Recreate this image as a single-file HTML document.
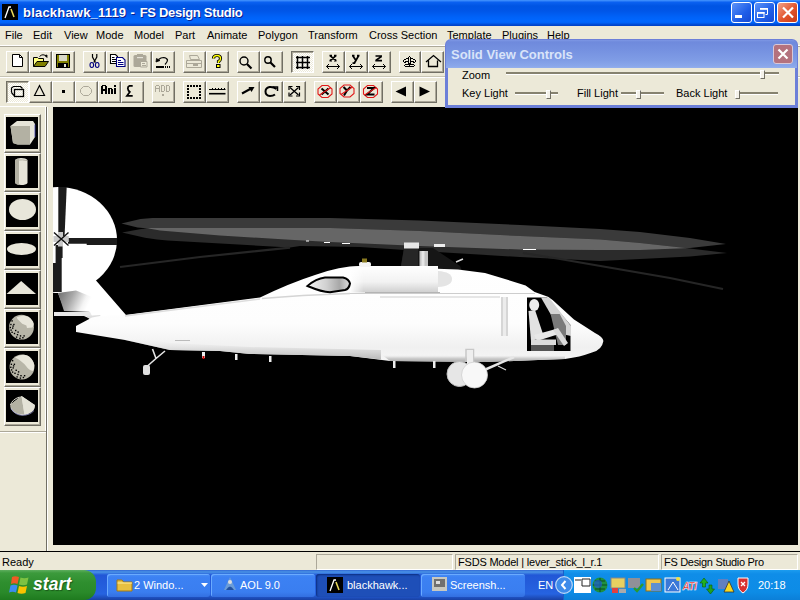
<!DOCTYPE html>
<html><head><meta charset="utf-8">
<style>
*{margin:0;padding:0;box-sizing:border-box}
html,body{width:800px;height:600px;overflow:hidden;background:#ECE9D8;font-family:"Liberation Sans",sans-serif;font-size:11px;color:#000;position:relative}
.abs{position:absolute}
#title{left:0;top:0;width:800px;height:26px;background:linear-gradient(#4A9AFF 0px,#2A7CF8 1px,#0A60F0 2.5px,#0054E3 6px,#0056E8 11px,#0062F8 17px,#0067FF 21px,#0062F6 23px,#0050DC 24px,#0040C4 26px)}
#ttext{left:23px;top:5px;color:#fff;font-weight:bold;font-size:13px;letter-spacing:0.2px;text-shadow:1px 1px 0 #0A1F8F}
.tb{top:2px;width:21px;height:21px;border:1px solid #fff;border-radius:3px;background:linear-gradient(135deg,#5D93F8,#1F5EE8 60%,#1649D3)}
.menu{top:29px;font-size:11px}
.btn{width:23px;height:22px;border-top:1px solid #fff;border-left:1px solid #fff;border-right:1px solid #716F64;border-bottom:1px solid #716F64;box-shadow:inset -1px -1px 0 #ACA899}
.btn svg{position:absolute;left:2px;top:2px}
.pressed{border-top:1px solid #716F64;border-left:1px solid #716F64;border-right:1px solid #fff;border-bottom:1px solid #fff;box-shadow:inset 1px 1px 0 #ACA899;background:repeating-conic-gradient(#fff 0 25%,#ECE9D8 0 50%) 0 0/2px 2px}
.lbtn{left:4px;width:37px;height:39px;border-top:1px solid #fff;border-left:1px solid #fff;border-right:1px solid #716F64;border-bottom:1px solid #716F64;box-shadow:inset -1px -1px 0 #ACA899}
.lbtn .in{position:absolute;left:2px;top:2px;width:32px;height:32px;background:#000}
#view{left:53px;top:107px;width:745px;height:438px;background:#000;overflow:hidden}
.sp{top:554px;height:16px;border-top:1px solid #ACA899;border-left:1px solid #ACA899;border-right:1px solid #fff;border-bottom:1px solid #fff;padding-left:2px;line-height:14px}
.tbtn{top:574px;height:23px;border-radius:3px;background:linear-gradient(#4A90F5 0px,#3C81F3 3px,#3A7EF0 18px,#336FE0 23px);box-shadow:inset 1px 1px 0 #6AAAFF}
.ttxt{top:578px;color:#fff;font-size:11px;line-height:14px}
#task{left:0;top:570px;width:800px;height:30px;background:linear-gradient(#3168D5 0px,#4993E6 2px,#2157D7 5px,#2663E0 24px,#1941A5 30px)}
</style></head><body>
<!-- title bar -->
<div id="title" class="abs"></div>
<div class="abs" style="left:2px;top:4px;width:16px;height:16px;background:#000">
<svg width="16" height="16" viewBox="0 0 16 16"><path d="M3 14 L7 3 L9 3" stroke="#fff" stroke-width="1.3" fill="none"/><path d="M9 5 L12 13" stroke="#EBD95A" stroke-width="1.6" fill="none"/></svg>
</div>
<div id="ttext" class="abs">blackhawk_1119<span style="letter-spacing:0.6px"> - </span><span style="letter-spacing:-0.3px">FS Design Studio</span></div>
<div class="abs tb" style="left:731px"></div>
<div class="abs tb" style="left:754px"></div>
<div class="abs tb" style="left:777px;background:linear-gradient(135deg,#F1A28A,#E2542C 55%,#C93A16)"></div>
<svg class="abs" style="left:731px;top:2px" width="67" height="21" viewBox="731 2 67 21">
<rect x="735" y="15" width="7" height="3" fill="#fff"/>
<path d="M760.5 8.5h7v6h-2" fill="none" stroke="#fff" stroke-width="1"/><rect x="760" y="8" width="8" height="1.8" fill="#fff"/>
<rect x="757.5" y="12.5" width="6.5" height="5" fill="none" stroke="#fff" stroke-width="1"/><rect x="757" y="12" width="7.5" height="1.8" fill="#fff"/>
<path d="M783 7.5L793 17.5M793 7.5L783 17.5" stroke="#fff" stroke-width="2.2"/>
</svg>

<!-- menu -->
<div class="abs menu" style="left:5px">File</div>
<div class="abs menu" style="left:33px">Edit</div>
<div class="abs menu" style="left:64px">View</div>
<div class="abs menu" style="left:96px">Mode</div>
<div class="abs menu" style="left:134px">Model</div>
<div class="abs menu" style="left:175px">Part</div>
<div class="abs menu" style="left:207px">Animate</div>
<div class="abs menu" style="left:258px">Polygon</div>
<div class="abs menu" style="left:308px">Transform</div>
<div class="abs menu" style="left:369px">Cross Section</div>
<div class="abs menu" style="left:447px">Template</div>
<div class="abs menu" style="left:502px">Plugins</div>
<div class="abs menu" style="left:547px">Help</div>
<div class="abs" style="left:0;top:45px;width:800px;height:1px;background:#fff"></div>
<div class="abs" style="left:0;top:46px;width:800px;height:1px;background:#ACA899"></div>

<!-- toolbar row 1 -->
<div class="abs" style="left:0;top:76px;width:800px;height:1px;background:#C8C5B4"></div>
<div class="abs" style="left:0;top:77px;width:800px;height:1px;background:#fff"></div>
<div class="abs btn" style="left:6px;top:51px;width:23px"></div>
<div class="abs btn" style="left:29px;top:51px;width:23px"></div>
<div class="abs btn" style="left:52px;top:51px;width:23px"></div>
<div class="abs btn" style="left:83px;top:51px;width:23px"></div>
<div class="abs btn" style="left:106px;top:51px;width:23px"></div>
<div class="abs btn" style="left:129px;top:51px;width:23px"></div>
<div class="abs btn" style="left:152px;top:51px;width:23px"></div>
<div class="abs btn" style="left:183px;top:51px;width:23px"></div>
<div class="abs btn" style="left:206px;top:51px;width:23px"></div>
<div class="abs btn" style="left:237px;top:51px;width:23px"></div>
<div class="abs btn" style="left:260px;top:51px;width:23px"></div>
<div class="abs btn pressed" style="left:291px;top:51px;width:23px"></div>
<div class="abs btn" style="left:322px;top:51px;width:23px"></div>
<div class="abs btn" style="left:345px;top:51px;width:23px"></div>
<div class="abs btn" style="left:368px;top:51px;width:23px"></div>
<div class="abs btn" style="left:399px;top:51px;width:22px"></div>
<div class="abs btn" style="left:421px;top:51px;width:23px"></div>
<div class="abs btn pressed" style="left:6px;top:81px;width:23px"></div>
<div class="abs btn" style="left:29px;top:81px;width:23px"></div>
<div class="abs btn" style="left:52px;top:81px;width:23px"></div>
<div class="abs btn" style="left:75px;top:81px;width:23px"></div>
<div class="abs btn" style="left:98px;top:81px;width:23px"></div>
<div class="abs btn" style="left:121px;top:81px;width:23px"></div>
<div class="abs btn" style="left:152px;top:81px;width:23px"></div>
<div class="abs btn" style="left:183px;top:81px;width:23px"></div>
<div class="abs btn" style="left:206px;top:81px;width:23px"></div>
<div class="abs btn" style="left:237px;top:81px;width:23px"></div>
<div class="abs btn" style="left:260px;top:81px;width:23px"></div>
<div class="abs btn" style="left:283px;top:81px;width:23px"></div>
<div class="abs btn" style="left:314px;top:81px;width:23px"></div>
<div class="abs btn" style="left:337px;top:81px;width:23px"></div>
<div class="abs btn" style="left:360px;top:81px;width:23px"></div>
<div class="abs btn" style="left:391px;top:81px;width:23px"></div>
<div class="abs btn" style="left:414px;top:81px;width:23px"></div>
<svg class="abs" style="left:0;top:0" width="450" height="106" viewBox="0 0 450 106">
<!-- new -->
<path d="M12.5 54.5H19.5L22.5 57.5V66.5H12.5Z" fill="#fff" stroke="#000"/>
<path d="M19.5 54.5V57.5H22.5" fill="none" stroke="#000"/>
<!-- open -->
<path d="M33.5 66.5V57.5H37.5L38.5 58.5H43.5V61" fill="#FFFF80" stroke="#000"/>
<path d="M33.5 66.5L37 61.5H48.5L45 66.5Z" fill="#808000" stroke="#000"/>
<path d="M39.5 56.5Q43 53 46.5 56.5" fill="none" stroke="#000"/>
<path d="M45 55.5L47 57.5L47 55Z" fill="#000" stroke="#000" stroke-width="0.8"/>
<!-- save -->
<rect x="56.5" y="54.5" width="13" height="13" fill="#808000" stroke="#000"/>
<rect x="59" y="55" width="8" height="6" fill="#D8D8C8"/>
<rect x="58" y="63" width="10" height="4.5" fill="#000"/>
<rect x="64" y="64" width="2" height="3" fill="#E0E0D0"/>
<!-- cut -->
<path d="M92.5 54V57L95.5 62.5M96.8 54V57L93.8 62.5" fill="none" stroke="#000" stroke-width="1.2"/>
<ellipse cx="91.8" cy="65" rx="1.8" ry="2.5" fill="none" stroke="#000080" stroke-width="1.1"/>
<ellipse cx="97.2" cy="65" rx="1.8" ry="2.5" fill="none" stroke="#000080" stroke-width="1.1"/>
<!-- copy -->
<path d="M110.5 54.5H115.5L117.5 56.5V63.5H110.5Z" fill="#fff" stroke="#000" stroke-width="1.1"/>
<path d="M112 57.5H114.5M112 59.5H116M112 61.5H116" stroke="#000"/>
<path d="M116.5 57.5H122.5L125 60V66.5H116.5Z" fill="#fff" stroke="#000080" stroke-width="1.1"/>
<path d="M118 60.5H121M118 62.5H123.5M118 64.5H123.5" stroke="#000080"/>
<!-- paste gray -->
<rect x="133.5" y="55" width="13" height="12" rx="1.5" fill="#ACA899"/>
<rect x="137" y="54" width="6" height="2" fill="#ACA899"/>
<rect x="137" y="57" width="6" height="1.2" fill="#E4E2D8"/>
<path d="M140.5 61.5H147V67H140.5Z" fill="#ECE9D8" stroke="#ACA899"/>
<path d="M142 63.5H145M142 65.5H146" stroke="#ACA899"/>
<!-- undo -->
<path d="M158.5 59.5Q161 57.5 163.5 57.5Q167 57.8 167.5 60Q167.5 62 165 64.5" fill="none" stroke="#000" stroke-width="1.2"/>
<path d="M156 62L156.5 58.5L160 60.5Z" fill="#000" stroke="#000" stroke-width="0.8"/>
<g shape-rendering="crispEdges" fill="#000"><rect x="156" y="66" width="8" height="2"/><rect x="165" y="66" width="1" height="2"/><rect x="167" y="66" width="1" height="2"/><rect x="169" y="66" width="1" height="2"/></g>
<!-- print gray -->
<path d="M189.5 55.5H197.5L199.5 59.5H190.5Z" fill="#ECE9D8" stroke="#ACA899"/>
<path d="M186.5 60.5H201.5V67.5H186.5Z" fill="#ECE9D8" stroke="#ACA899"/>
<path d="M187 63.5H201" stroke="#ACA899"/>
<rect x="193" y="64" width="5" height="2" fill="#ACA899"/>
<!-- help -->
<path d="M213.5 58.5Q213.5 55.5 217 55.5Q220.5 55.5 220.5 58.5Q220.5 60.5 218.5 61.5V63" fill="none" stroke="#000" stroke-width="3.2"/>
<path d="M213.5 58.5Q213.5 55.5 217 55.5Q220.5 55.5 220.5 58.5Q220.5 60.5 218.5 61.5V63" fill="none" stroke="#FFFF00" stroke-width="1.4"/>
<rect x="216.5" y="64.5" width="3.5" height="3" fill="#FFFF00" stroke="#000"/>
<!-- zoom in -->
<circle cx="244" cy="61" r="4" fill="none" stroke="#000" stroke-width="1.4"/>
<path d="M247 64L251.5 68.5" stroke="#000" stroke-width="2.2"/>
<!-- zoom out -->
<circle cx="268" cy="60" r="3.2" fill="none" stroke="#000" stroke-width="1.4"/>
<path d="M270.5 62.5L275 67" stroke="#000" stroke-width="2.2"/>
<!-- grid -->
<path d="M297.5 56V69M302.5 56V69M307.5 56V69M296 57.5H310M296 62.5H310M296 67.5H310" stroke="#000" stroke-width="1.5"/>
<!-- xyz -->
<path d="M330.3 55.8L336 60.5M335.7 55.8L330.3 60.5M329.5 55.6H332M334 55.6H336.5M329.5 60.6H332M334 60.6H336.5" stroke="#000" stroke-width="1.7"/>
<path d="M352.8 55.8L355.8 60.3M358.6 55.8L354.3 63.2M352 55.6H354.5M357 55.6H359.5M352.5 63.2H355.3" stroke="#000" stroke-width="1.7"/>
<path d="M375.5 56H382M381.5 56.5L376 60.2M375.3 60.6H382" stroke="#000" stroke-width="1.6"/>
<path d="M326.5 66.5H339.5M329 64L326.5 66.5L329 69M337 64L339.5 66.5L337 69" fill="none" stroke="#000" stroke-width="1"/>
<path d="M349.5 66.5H362.5M352 64L349.5 66.5L352 69M360 64L362.5 66.5L360 69" fill="none" stroke="#000" stroke-width="1"/>
<path d="M372.5 66.5H385.5M375 64L372.5 66.5L375 69M383 64L385.5 66.5L383 69" fill="none" stroke="#000" stroke-width="1"/>
<!-- top symbol -->
<g fill="#000" shape-rendering="crispEdges"><rect x="409" y="56" width="1" height="1"/><rect x="408" y="57" width="1" height="7"/><rect x="410" y="57" width="1" height="7"/><rect x="406" y="58" width="2" height="1"/><rect x="411" y="58" width="2" height="1"/><rect x="404" y="59" width="2" height="1"/><rect x="413" y="59" width="2" height="1"/><rect x="403" y="60" width="1" height="2"/><rect x="415" y="60" width="1" height="2"/><rect x="404" y="62" width="2" height="1"/><rect x="413" y="62" width="2" height="1"/><rect x="405" y="61" width="3" height="1"/><rect x="411" y="61" width="3" height="1"/><rect x="409" y="63" width="1" height="1"/><rect x="405" y="64" width="9" height="1"/><rect x="405" y="66" width="9" height="1"/><rect x="404" y="65" width="1" height="1"/><rect x="414" y="65" width="1" height="1"/><rect x="409" y="64" width="1" height="3"/></g>
<!-- house -->
<path d="M426 62L433.5 55.5L441 62M428.5 60.5V66.5H437.5V60.5" fill="none" stroke="#000" stroke-width="1.3"/>

<!-- row 2 -->
<path d="M11.5 92.5V88L13.5 86.5H20.5L22.5 88.5M11.5 92.5L14 95.5" fill="none" stroke="#000" stroke-width="1.2"/>
<rect x="14.5" y="89.5" width="9" height="7" fill="none" stroke="#000" stroke-width="1.3"/>
<path d="M34.5 95.5L39.5 85.5L44.5 95.5Z" fill="#ECE9D8" stroke="#000" stroke-width="1.2"/>
<rect x="62" y="90" width="3" height="3" fill="#000"/>
<path d="M83.5 86.5H88.5L91.5 89.5V92.5L88.5 95.5H83.5L80.5 92.5V89.5Z" fill="none" stroke="#ACA899"/>
<g fill="#000" shape-rendering="crispEdges"><rect x="102" y="85" width="4" height="1"/><rect x="101" y="86" width="2" height="8"/><rect x="105" y="86" width="2" height="8"/><rect x="103" y="89" width="2" height="2"/><rect x="108" y="88" width="4" height="1"/><rect x="108" y="88" width="2" height="6"/><rect x="111" y="89" width="2" height="5"/><rect x="114" y="85" width="2" height="2"/><rect x="114" y="88" width="2" height="6"/></g>
<path d="M132.7 85.8H129.5Q127.8 86.3 127.8 88.5Q128 90.5 129.8 92L127 95.8H132.7" fill="none" stroke="#000" stroke-width="1.8"/>
<g fill="#ACA899" shape-rendering="crispEdges"><rect x="156" y="85" width="3" height="1"/><rect x="155" y="86" width="1" height="6"/><rect x="159" y="86" width="1" height="6"/><rect x="156" y="88" width="3" height="1"/><rect x="161" y="85" width="3" height="1"/><rect x="161" y="91" width="3" height="1"/><rect x="161" y="85" width="1" height="7"/><rect x="164" y="86" width="1" height="5"/><rect x="166" y="85" width="3" height="1"/><rect x="166" y="91" width="3" height="1"/><rect x="166" y="85" width="1" height="7"/><rect x="169" y="86" width="1" height="5"/></g>
<rect x="162" y="94" width="2" height="2" fill="#ACA899" shape-rendering="crispEdges"/>
<g fill="#000" shape-rendering="crispEdges"><rect x="187" y="85" width="2" height="2"/><rect x="187" y="97" width="2" height="2"/><rect x="190" y="85" width="2" height="2"/><rect x="190" y="97" width="2" height="2"/><rect x="193" y="85" width="2" height="2"/><rect x="193" y="97" width="2" height="2"/><rect x="196" y="85" width="2" height="2"/><rect x="196" y="97" width="2" height="2"/><rect x="199" y="85" width="2" height="2"/><rect x="199" y="97" width="2" height="2"/><rect x="187" y="88" width="2" height="2"/><rect x="199" y="88" width="2" height="2"/><rect x="187" y="91" width="2" height="2"/><rect x="199" y="91" width="2" height="2"/><rect x="187" y="94" width="2" height="2"/><rect x="199" y="94" width="2" height="2"/></g>
<path d="M209 89.5H225.5" stroke="#000" stroke-width="1"/>
<path d="M209 93.7H225.5" stroke="#000" stroke-width="1.6"/>
<path d="M212.5 88V89M215.5 88V89M218.5 88V89M221.5 88V89M224.5 88V89" stroke="#000"/>
<path d="M242 93.5L252 88" stroke="#000" stroke-width="2"/>
<path d="M248.5 87L254.5 87L251.5 92Z" fill="#000"/>
<path d="M276.5 89Q273 86.5 269.5 87Q265.5 88 265.5 91.5Q265.5 95.5 270 96Q273 96 275 94.5" fill="none" stroke="#000" stroke-width="2"/>
<path d="M272.5 87H277.5V91" fill="none" stroke="#000" stroke-width="1.5"/>
<path d="M290 87.5L298.5 95M298.5 87.5L290 95" stroke="#000" stroke-width="1.3"/>
<path d="M289 90V86.5H292.5M296 86.5H299.5V90M289 92.5V96H292.5M296 96H299.5V92.5" fill="none" stroke="#000" stroke-width="1.2"/>
<g fill="none" stroke="#E01818" stroke-width="1.1">
<path d="M322 85.5H328L332 89V94L328 97.5H322L318 94V89Z"/>
<path d="M344 85H350L354 88.5V93.5L350 97H344L340 93.5V88.5Z"/>
<path d="M367.5 85.5H373.5L377.5 89V94L373.5 97.5H367.5L363.5 94V89Z"/>
</g>
<path d="M321.5 88.5L328.5 94.5M328.5 88.5L321.5 94.5" stroke="#000" stroke-width="2"/>
<path d="M343.5 87L347 90.5L350.5 87M347 90.5L344 95.5" fill="none" stroke="#000" stroke-width="2"/>
<path d="M367 88H374L367 94.5H374.5" fill="none" stroke="#000" stroke-width="1.9"/>
<path d="M319.5 95L331 87.5M341 94.5L352.5 87M364.5 95L376.5 87.5" stroke="#E01818" stroke-width="1.1"/>
<path d="M395.5 91.5L406 86.5V96.5Z" fill="#000"/>
<path d="M430 91.5L419.5 86.5V96.5Z" fill="#000"/>
</svg>


<div class="abs" style="left:0;top:106px;width:46px;height:1px;background:#fff"></div>

<!-- left toolbar -->
<div class="abs" style="left:0;top:107px;width:46px;height:325px;border-right:1px solid #fff"></div>
<div class="abs lbtn" style="top:114px"></div>
<div class="abs" style="left:6px;top:117px;width:32px;height:32px;background:#000"></div>
<div class="abs lbtn" style="top:153px"></div>
<div class="abs" style="left:6px;top:156px;width:32px;height:32px;background:#000"></div>
<div class="abs lbtn" style="top:192px"></div>
<div class="abs" style="left:6px;top:195px;width:32px;height:32px;background:#000"></div>
<div class="abs lbtn" style="top:231px"></div>
<div class="abs" style="left:6px;top:234px;width:32px;height:32px;background:#000"></div>
<div class="abs lbtn" style="top:270px"></div>
<div class="abs" style="left:6px;top:273px;width:32px;height:32px;background:#000"></div>
<div class="abs lbtn" style="top:309px"></div>
<div class="abs" style="left:6px;top:312px;width:32px;height:32px;background:#000"></div>
<div class="abs lbtn" style="top:348px"></div>
<div class="abs" style="left:6px;top:351px;width:32px;height:32px;background:#000"></div>
<div class="abs lbtn" style="top:387px"></div>
<div class="abs" style="left:6px;top:390px;width:32px;height:32px;background:#000"></div>
<svg class="abs" style="left:0;top:107px" width="46" height="320" viewBox="0 107 46 320">
<!-- cube -->
<path d="M10.5 126L17 121H33L35 124V137L30 144.5H18L13 143Z" fill="#E6E4D8"/>
<path d="M10.5 126H30V144.5H17L13 143Z" fill="#B3B1A3"/>
<path d="M35 124.5V137" stroke="#3838A8" stroke-width="0.8"/>
<!-- cylinder -->
<path d="M15 160Q17 158 21 158Q26 158 27.5 160V183Q26 185 21 185Q17 185 15 183Z" fill="#E6E4D8"/>
<path d="M15 160Q16 159 19 159V185Q16 184.5 15 183Z" fill="#B3B1A3"/>
<path d="M19 160Q22 159.5 27 160.5" stroke="#B3B1A3" stroke-width="1" fill="none"/>
<!-- ellipse -->
<ellipse cx="22.5" cy="209.5" rx="13.5" ry="10.5" fill="#E8E6DA"/>
<!-- flat ellipse -->
<ellipse cx="21.5" cy="249" rx="14.5" ry="6" fill="#E8E6DA"/>
<!-- triangle -->
<path d="M6.5 294L21.2 281L36 294Z" fill="#E8E6DA"/>
<!-- sphere 1 -->
<circle cx="21.5" cy="327.2" r="12.4" fill="#B8B6A8"/>
<path d="M16.8 317.2Q22 314.5 28 316.5Q33 319.5 33.8 324Q33.5 326 32.4 327.4L27 328L26.4 325.6L22.2 323.8L17.4 319Z" fill="#E8E6DA"/>
<g fill="#000"><rect x="11.4" y="320.2" width="1.4" height="1.4"/><rect x="10.200000000000001" y="323.79999999999995" width="1.4" height="1.4"/><rect x="13.200000000000001" y="323.79999999999995" width="1.4" height="1.4"/><rect x="9.6" y="326.79999999999995" width="1.4" height="1.4"/><rect x="12.0" y="327.4" width="1.4" height="1.4"/><rect x="15.0" y="329.79999999999995" width="1.4" height="1.4"/><rect x="11.4" y="331.59999999999997" width="1.4" height="1.4"/><rect x="13.8" y="332.79999999999995" width="1.4" height="1.4"/><rect x="16.799999999999997" y="334.0" width="1.4" height="1.4"/><rect x="19.799999999999997" y="335.2" width="1.4" height="1.4"/><rect x="23.4" y="335.2" width="1.4" height="1.4"/><rect x="19.2" y="337.59999999999997" width="1.4" height="1.4"/><rect x="22.2" y="337.0" width="1.4" height="1.4"/><rect x="10.4" y="329.4" width="1.4" height="1.4"/><rect x="15.9" y="336.4" width="1.4" height="1.4"/><rect x="12.4" y="325.4" width="1.4" height="1.4"/><rect x="17.4" y="331.4" width="1.4" height="1.4"/></g>
<!-- sphere 2 -->
<circle cx="22" cy="367" r="12.4" fill="#B8B6A8"/>
<path d="M15 357.5Q21 353.5 27.5 355.5Q33 358.5 34.3 365Q34.3 369 33 371Q29 370.5 26 366Q22 361 15 357.5Z" fill="#E8E6DA"/>
<g fill="#000"><rect x="11.9" y="360.0" width="1.4" height="1.4"/><rect x="10.700000000000001" y="363.59999999999997" width="1.4" height="1.4"/><rect x="13.700000000000001" y="363.59999999999997" width="1.4" height="1.4"/><rect x="10.1" y="366.59999999999997" width="1.4" height="1.4"/><rect x="12.5" y="367.2" width="1.4" height="1.4"/><rect x="15.500000000000002" y="369.59999999999997" width="1.4" height="1.4"/><rect x="11.9" y="371.4" width="1.4" height="1.4"/><rect x="14.3" y="372.59999999999997" width="1.4" height="1.4"/><rect x="17.299999999999997" y="373.8" width="1.4" height="1.4"/><rect x="20.299999999999997" y="375.0" width="1.4" height="1.4"/><rect x="23.9" y="375.0" width="1.4" height="1.4"/><rect x="19.7" y="377.4" width="1.4" height="1.4"/><rect x="22.7" y="376.8" width="1.4" height="1.4"/><rect x="10.9" y="369.2" width="1.4" height="1.4"/><rect x="16.4" y="376.2" width="1.4" height="1.4"/><rect x="12.9" y="365.2" width="1.4" height="1.4"/><rect x="17.9" y="371.2" width="1.4" height="1.4"/></g>
<!-- cone -->
<path d="M21.5 396L10.5 404.5Q9.5 413 22.5 415.3Q35.5 413 34.8 405Z" fill="#E8E6DA"/>
<path d="M21.5 396L10.5 404.5Q11 411 17 413.5L24.5 414.8Z" fill="#B3B1A3"/>
<path d="M21.5 396L34.8 405Q34.5 411 28 414L24.5 414.8Z" fill="#E4E2D6"/>
<path d="M10.5 405Q12 399.5 19.5 397" fill="none" stroke="#DCDACE" stroke-width="1"/>
<path d="M11 408.5Q15 415.2 22.5 415.3Q30 415.2 34 410.5" fill="none" stroke="#9A9AD0" stroke-width="0.8"/>
</svg>

<div class="abs" style="left:46px;top:107px;width:1px;height:445px;background:#716F64"></div>
<div class="abs" style="left:47px;top:107px;width:1px;height:445px;background:#fff"></div>
<div class="abs" style="left:0;top:431px;width:46px;height:1px;background:#ACA899"></div>
<div class="abs" style="left:0;top:432px;width:46px;height:1px;background:#fff"></div>

<!-- viewport -->
<div id="view" class="abs"></div>
<svg class="abs" style="left:53px;top:107px" width="745" height="438" viewBox="53 107 745 438">
<defs>
<clipPath id="lowc"><path d="M122.1 232.5L141.25 229.1L150.25 228L330 228L420 231L520 236L600 239.5L640 243L690 248.5L727 253L690 256.5L640 259L600 261L520 257L420 251L360 247L300 246L290 247.6L167.5 240.4L157 239.6L145 237.75Z"/></clipPath>
<linearGradient id="pyl" x1="0" y1="0" x2="1" y2="0.3"><stop offset="0" stop-color="#6a6a6a"/><stop offset="0.45" stop-color="#a8a8a8"/><stop offset="0.85" stop-color="#f4f4f4"/><stop offset="1" stop-color="#fff"/></linearGradient>
<linearGradient id="bodyg" x1="0" y1="0" x2="0" y2="1"><stop offset="0" stop-color="#fff"/><stop offset="0.6" stop-color="#fdfdfd"/><stop offset="0.85" stop-color="#f0f0f0"/><stop offset="1" stop-color="#f6f6f6"/></linearGradient>
<linearGradient id="nac" x1="0" y1="0" x2="0" y2="1"><stop offset="0" stop-color="#fff"/><stop offset="0.6" stop-color="#f2f2f2"/><stop offset="1" stop-color="#cfcfcf"/></linearGradient>
<linearGradient id="eyeg" x1="0" y1="0" x2="1" y2="0"><stop offset="0" stop-color="#f4f4f4"/><stop offset="0.45" stop-color="#d0d0d0"/><stop offset="0.75" stop-color="#a8a8a8"/><stop offset="1" stop-color="#e0e0e0"/></linearGradient>
<linearGradient id="nacmg" x1="0" y1="0" x2="1" y2="0"><stop offset="0" stop-color="#000"/><stop offset="0.15" stop-color="#fff"/><stop offset="1" stop-color="#fff"/></linearGradient>
<mask id="nacm"><rect x="350" y="260" width="90" height="40" fill="url(#nacmg)"/></mask>
<linearGradient id="shd" x1="0" y1="0" x2="0" y2="1"><stop offset="0" stop-color="#fff" stop-opacity="0"/><stop offset="0.6" stop-color="#d4d4d4" stop-opacity="0.8"/><stop offset="1" stop-color="#b8b8b8"/></linearGradient>
<linearGradient id="shd2" x1="0" y1="0" x2="0" y2="1"><stop offset="0" stop-color="#fff" stop-opacity="0"/><stop offset="0.5" stop-color="#d0d0d0"/><stop offset="1" stop-color="#a8a8a8"/></linearGradient>
</defs>
<!-- tail rotor disc -->
<ellipse cx="58" cy="240" rx="59" ry="53" fill="#fff"/>
<path d="M53 265H105L95.6 280L126 315L102 324L84 316L90 311L64 308L58 293L53 292Z" fill="#fff"/>
<path d="M58 293L76 290.5L92 297L92 312L64 311Z" fill="url(#pyl)"/>
<path d="M58.3 187H66.7L64.5 238H58.3Z" fill="#1c1c1c"/>
<path d="M55.6 245H62.6V258H61.7V292H53V263H55.6Z" fill="#1c1c1c"/>
<path d="M68 238H117V245H86.7V243.8H68Z" fill="#1c1c1c"/>
<path d="M58 232H63V236H68.8V242H63V246.5H58V242H53.5V236H58Z" fill="#c8c8c8"/>
<path d="M54 232.5L68.5 245.5M68.5 232.5L54 245.5" stroke="#111" stroke-width="1.4"/>
<!-- main rotor discs -->
<path d="M121.4 223.5L140.5 219L152.5 218L330 218L420 220.5L520 225L600 229L640 232L690 238L726 244L690 248L640 250L600 250L520 249.5L420 246L330 242L290 239.8L220 235.5L175 231.8L160 230.5L148.75 228.4L137.5 227.6Z" fill="#3a3a3a"/>
<path d="M122.1 232.5L141.25 229.1L150.25 228L330 228L420 231L520 236L600 239.5L640 243L690 248.5L727 253L690 256.5L640 259L600 261L520 257L420 251L360 247L300 246L290 247.6L167.5 240.4L157 239.6L145 237.75Z" fill="#2b2b2b"/>
<path clip-path="url(#lowc)" d="M121.4 223.5L140.5 219L152.5 218L330 218L420 220.5L520 225L600 229L640 232L690 238L726 244L690 248L640 250L600 250L520 249.5L420 246L330 242L290 239.8L220 235.5L175 231.8L160 230.5L148.75 228.4L137.5 227.6Z" fill="#666"/>
<path d="M120 267L200 257L290 247.6M523 253L560 259L612 268L670 278L723 289" fill="none" stroke="#262626" stroke-width="2.2"/>
<path d="M306 241h3M324 242.5h6M342 243.5h8M523 249.5h13" stroke="#fff" stroke-width="1.2"/>
<!-- rotor head -->
<path d="M401 266L404 248H433L460 266L462 271H401Z" fill="#161616"/>
<path d="M401 266L404 248H418V266Z" fill="#262626"/>
<rect x="404" y="242.5" width="15" height="6" fill="#e8e8e8"/>
<rect x="434" y="244" width="11" height="3" fill="#eee"/>
<rect x="419.5" y="251" width="8.5" height="15" fill="#c4c4c4"/>
<rect x="421.5" y="251" width="3" height="15" fill="#e6e6e6"/>
<path d="M456 262L463 259" stroke="#ddd" stroke-width="1.5"/>
<!-- tail pylon & stabilizer -->
<path d="M54 312H90L92 316H54Z" fill="#e8e8e8"/>
<path d="M86 316L100 315L105 323L92 321Z" fill="#dedede"/>
<!-- fuselage -->
<path d="M76 326L92 317.5L100 316L125 315L260 297.5Q290 283 315 275Q340 266 360 266L458 269.6L485 273L507.5 279.8L525.6 285.4L534.6 292L548 296.7L552.6 300L574 319.5L595 333Q603 337 603.4 341Q602 350 592 352.5Q580 357 565 359L538 360L485 362L390 361L350 356L250 354L220 351L170 350L125 340L76 332Z" fill="url(#bodyg)"/>
<path d="M125 316L260 299" stroke="#ddd" stroke-width="1.5"/>

<path d="M125 336L170 343L250 347L381 350V359.5L350 356L250 354L220 351L170 350L125 340Z" fill="url(#shd)"/>
<path d="M381 354L485 356L534 355L565 356V359L538 360L485 362L390 361Z" fill="url(#shd2)"/>
<path d="M350 293.5H535" stroke="#cdcdcd" stroke-width="1"/>
<path d="M175 340.5H190" stroke="#bbb" stroke-width="1"/>
<path d="M262 298.5Q300 295 350 293.5" fill="none" stroke="#d4d4d4" stroke-width="1.5"/>
<path d="M152.5 349L156 358.5L165 351M156 358.5L147.5 366" fill="none" stroke="#e4e4e4" stroke-width="1.6"/>
<!-- engine nacelle -->
<path d="M350 266H438V292.5H350Z" fill="url(#nac)" mask="url(#nacm)"/>
<path d="M438 271Q452 272 452 279Q452 286 438 287Z" fill="#e4e4e4"/>
<path d="M365 292.5H440" stroke="#b4b4b4" stroke-width="1.2"/>
<path d="M307.5 286Q316 278.5 325 277.5L343 277.5Q349 279 350 283.5Q349 289 345 290L330 292.3Q322 292 307.5 286Z" fill="url(#eyeg)" stroke="#000" stroke-width="2"/>
<!-- beacon -->
<rect x="359" y="262" width="12" height="5" rx="2" fill="#f4f4f4"/>
<rect x="362" y="258.5" width="5" height="4" fill="#8a7a20"/>
<!-- cabin windows -->
<rect x="501" y="297" width="7" height="39" fill="#d6d6d6"/>
<rect x="503" y="297" width="3" height="39" fill="#ececec"/>
<rect x="380" y="296" width="120" height="2" fill="#e6e6e6"/>
<!-- cockpit opening -->
<path d="M527 297.6H547L570.5 325V351H527Z" fill="#000"/>
<path d="M541 297.6H549L571 326V336L562 334Z" fill="#d4d4d4"/>
<path d="M550.6 314L559.7 314L566 326V345L558 345Z" fill="#7a7a7a"/>
<ellipse cx="534.2" cy="305" rx="5" ry="6" fill="#ececec"/>
<path d="M528.5 311L535 310L544 337L531 341Z" fill="#e2e2e2"/>
<path d="M534 335L556 329L559 334L537 341Z" fill="#e8e8e8"/>
<path d="M553 330L558 328L568 343L564 346Z" fill="#dadada"/>
<rect x="531" y="339.5" width="25" height="5.5" fill="#dcdcdc"/>
<rect x="531" y="345" width="23" height="6" fill="#555"/>
<!-- landing gear -->

<rect x="143" y="365" width="7" height="10" rx="2" fill="#e0e0e0"/>
<rect x="202" y="352" width="3" height="6" fill="#eee"/><rect x="202.5" y="356" width="2" height="3" fill="#c00"/>
<rect x="235" y="354" width="2.5" height="6" fill="#eee"/>
<rect x="269" y="356" width="2.5" height="6" fill="#eee"/>
<rect x="393" y="361" width="2.5" height="7" fill="#eee"/>
<rect x="433" y="361" width="2.5" height="7" fill="#eee"/>
<path d="M466 362V349.5H473.5V368" fill="none" stroke="#c8c8c8" stroke-width="1.5"/><rect x="467" y="350" width="6" height="18" fill="#eee"/>
<path d="M482 371L514 357" stroke="#e6e6e6" stroke-width="2.5"/><path d="M498 366L506 370" stroke="#ddd" stroke-width="1.2"/>
<circle cx="459.5" cy="374" r="12.5" fill="#e6e6e6" stroke="#bdbdbd" stroke-width="1"/>
<circle cx="474.5" cy="375" r="13" fill="#f8f8f8" stroke="#cfcfcf" stroke-width="0.8"/>
</svg>


<!-- dialog -->
<div class="abs" style="left:445px;top:39px;width:353px;height:69px;background:#6C7FD8;border-radius:6px 6px 0 0"></div>
<div class="abs" style="left:446px;top:40px;width:351px;height:28px;border-radius:5px 5px 0 0;background:linear-gradient(#7D97E4 0px,#6F8ADC 2px,#7591E0 10px,#7F9CE5 20px,#8AA7EA 26px,#93AFEC 28px)"></div>
<div class="abs" style="left:451px;top:47px;color:#D9E4F9;font-weight:bold;font-size:13px;letter-spacing:0px">Solid View Controls</div>
<div class="abs" style="left:773px;top:44px;width:20px;height:20px;border:1px solid #D8C8D8;border-radius:3px;background:#B4727E"></div>
<svg class="abs" style="left:773px;top:44px" width="20" height="20"><path d="M5.5 5.5L14.5 14.5M14.5 5.5L5.5 14.5" stroke="#fff" stroke-width="2.2"/></svg>
<div class="abs" style="left:448px;top:68px;width:347px;height:37px;background:#ECE9D8"></div>
<div class="abs" style="left:462px;top:68px;line-height:14px">Zoom</div>
<div class="abs" style="left:462px;top:86px;line-height:14px">Key Light</div>
<div class="abs" style="left:577px;top:86px;line-height:14px">Fill Light</div>
<div class="abs" style="left:676px;top:86px;line-height:14px">Back Light</div>
<!-- sliders -->
<div class="abs" style="left:506px;top:72px;width:273px;border-top:2px solid #86826F;border-bottom:1px solid #fff;height:3px"></div>
<div class="abs" style="left:760px;top:70px;width:5px;height:9px;background:#F4F2EA;border-left:1px solid #fff;border-top:1px solid #fff;border-right:1px solid #716F64;border-bottom:1px solid #716F64"></div>
<div class="abs" style="left:515px;top:92px;width:43px;border-top:2px solid #86826F;border-bottom:1px solid #fff;height:3px"></div>
<div class="abs" style="left:546px;top:90px;width:5px;height:9px;background:#F4F2EA;border-left:1px solid #fff;border-top:1px solid #fff;border-right:1px solid #716F64;border-bottom:1px solid #716F64"></div>
<div class="abs" style="left:621px;top:92px;width:43px;border-top:2px solid #86826F;border-bottom:1px solid #fff;height:3px"></div>
<div class="abs" style="left:636px;top:90px;width:5px;height:9px;background:#F4F2EA;border-left:1px solid #fff;border-top:1px solid #fff;border-right:1px solid #716F64;border-bottom:1px solid #716F64"></div>
<div class="abs" style="left:735px;top:92px;width:43px;border-top:2px solid #86826F;border-bottom:1px solid #fff;height:3px"></div>
<div class="abs" style="left:735px;top:90px;width:5px;height:9px;background:#F4F2EA;border-left:1px solid #fff;border-top:1px solid #fff;border-right:1px solid #716F64;border-bottom:1px solid #716F64"></div>
<!-- status -->
<div class="abs" style="left:0;top:551px;width:800px;height:1px;background:#000"></div>
<div class="abs" style="left:2px;top:555px;line-height:14px">Ready</div>
<div class="abs sp" style="left:316px;width:137px"></div>
<div class="abs sp" style="left:455px;width:204px;letter-spacing:-0.2px">FSDS Model | lever_stick_l_r.1</div>
<div class="abs sp" style="left:661px;width:137px;letter-spacing:-0.3px">FS Design Studio Pro</div>

<div id="task" class="abs"></div>
<!-- taskbar -->
<div class="abs" style="left:0;top:570px;width:96px;height:30px;border-radius:0 12px 12px 0;background:linear-gradient(#5EAE5E 0px,#3C9A3C 3px,#2F8F2F 12px,#2A8A2A 22px,#1E7A1E 30px)"></div>
<svg class="abs" style="left:9px;top:575px" width="22" height="20" viewBox="0 0 22 20">
<path d="M3 2Q6 0.5 10 2L8.5 9Q5 7.5 2 9Z" fill="#F05A24"/>
<path d="M11.5 2.5Q15 4 19.5 2.5L18 9.5Q14.5 11 10 9.5Z" fill="#7DC242"/>
<path d="M1.5 10.5Q5 9 8.5 10.5L7 17.5Q3.5 16 0 17.5Z" fill="#3C8CF0"/>
<path d="M10 11Q14 12.5 18 11L16.5 18Q12.5 19.5 8.5 18Z" fill="#F9C300"/>
</svg>
<div class="abs" style="left:33px;top:572px;color:#fff;font-weight:bold;font-style:italic;font-size:17.5px;line-height:25px;letter-spacing:0.1px;text-shadow:1px 1px 1px #1A5A1A">start</div>
<div class="abs tbtn" style="left:107px;width:103px"></div>
<div class="abs tbtn" style="left:211px;width:104px"></div>
<div class="abs tbtn" style="left:316px;width:104px;background:#1E4FB8;box-shadow:inset 1px 1px 2px #0B2E80"></div>
<div class="abs tbtn" style="left:421px;width:104px"></div>
<div class="abs ttxt" style="left:134px">2 Windo...</div>
<svg class="abs" style="left:201px;top:583px" width="7" height="5"><path d="M0 0H7L3.5 4Z" fill="#fff"/></svg>
<div class="abs ttxt" style="left:240px">AOL 9.0</div>
<div class="abs ttxt" style="left:347px">blackhawk...</div>
<div class="abs ttxt" style="left:450px">Screensh...</div>
<svg class="abs" style="left:116px;top:577px" width="18" height="16"><path d="M1 3H6L7.5 5H16V14H1Z" fill="#E8C040" stroke="#A07818"/><path d="M1.5 6H16" stroke="#FFF0A0"/></svg>
<svg class="abs" style="left:222px;top:576px" width="16" height="16"><path d="M8 1L2 14H14Z" fill="#6A9CD8"/><path d="M4 14Q8 7 12 14" fill="#2050A0"/><circle cx="8" cy="6" r="2" fill="#ddd"/></svg>
<div class="abs" style="left:327px;top:577px;width:16px;height:16px;background:#000"></div>
<svg class="abs" style="left:327px;top:577px" width="16" height="16"><path d="M3 14L7 3L9 3" stroke="#fff" stroke-width="1.3" fill="none"/><path d="M9 5L12 13" stroke="#EBD95A" stroke-width="1.6"/></svg>
<svg class="abs" style="left:431px;top:576px" width="17" height="16"><rect x="1" y="1" width="15" height="14" fill="#C8C8C0"/><rect x="3" y="3" width="11" height="8" fill="#707070"/><rect x="5" y="5" width="4" height="3" fill="#ddd"/></svg>
<!-- tray -->
<div class="abs" style="left:563px;top:570px;width:237px;height:30px;background:linear-gradient(#1C9CEF 0px,#0F8DE8 4px,#0D8CE6 22px,#0B7FD8 30px);border-left:1px solid #1A5EC8"></div>
<div class="abs" style="left:538px;top:578px;color:#fff;font-size:11px;line-height:14px">EN</div>
<svg class="abs" style="left:555px;top:576px" width="18" height="18"><circle cx="9" cy="9" r="8.3" fill="#3D8BEA" stroke="#BCD8F8" stroke-width="1.2"/><path d="M10.5 5L7 9L10.5 13" fill="none" stroke="#fff" stroke-width="2"/></svg>
<svg class="abs" style="left:573px;top:576px" width="180" height="18" viewBox="573 576 180 18">
<rect x="574" y="577" width="17" height="16" fill="#fff"/><path d="M575 580h6M582 579h8v7h-8z" stroke="#222" fill="none"/>
<circle cx="600" cy="585" r="7.5" fill="#1E9040"/><path d="M593 585h14M600 578v14M595 581h10M595 589h10" stroke="#0A4A20" stroke-width="1"/><circle cx="598" cy="584" r="4" fill="#2060D0" opacity="0.7"/>
<rect x="611" y="578" width="14" height="10" fill="#E8D060" stroke="#888"/><rect x="612" y="588" width="6" height="5" fill="#E04040"/><rect x="619" y="589" width="7" height="4" fill="#aaa"/>
<rect x="628" y="578" width="12" height="10" fill="#909098"/><path d="M634 588l3 3 6-7" stroke="#2C9A2C" stroke-width="2.4" fill="none"/>
<rect x="646" y="579" width="15" height="12" fill="#F0C850" stroke="#8A7020"/><rect x="651" y="583" width="10" height="8" fill="#6090D0"/>
<rect x="665" y="578" width="15" height="14" fill="#3A78D8" stroke="#fff"/><path d="M668 590l5-8 5 8" stroke="#fff" fill="none"/><circle cx="678" cy="579" r="2" fill="#F0E040"/>
<text x="682.5" y="590" font-family="Liberation Sans" font-weight="bold" font-style="italic" font-size="10" fill="#E81818" stroke="#fff" stroke-width="0.5" letter-spacing="-0.5">ATI</text>
<path d="M700 583l4-5 4 5h-2.5v4h-3v-4z" fill="#20B020" stroke="#0A5A0A" stroke-width="0.6"/><path d="M709 585h3v4h2.5l-4 5-4-5h2.5z" fill="#20A020" stroke="#0A5A0A" stroke-width="0.6"/>
<rect x="718" y="579" width="10" height="10" fill="#6080C0"/><path d="M724 592l5-11 5 11z" fill="#F8D820" stroke="#333" stroke-width="0.8"/>
<path d="M738 578h10v6q0 6-5 9q-5-3-5-9z" fill="#D83030" stroke="#fff"/><path d="M741 582l4 4M745 582l-4 4" stroke="#fff" stroke-width="1.3"/>
</svg>
<div class="abs" style="left:758px;top:578px;color:#fff;font-size:11px;line-height:14px">20:18</div>

</body></html>
